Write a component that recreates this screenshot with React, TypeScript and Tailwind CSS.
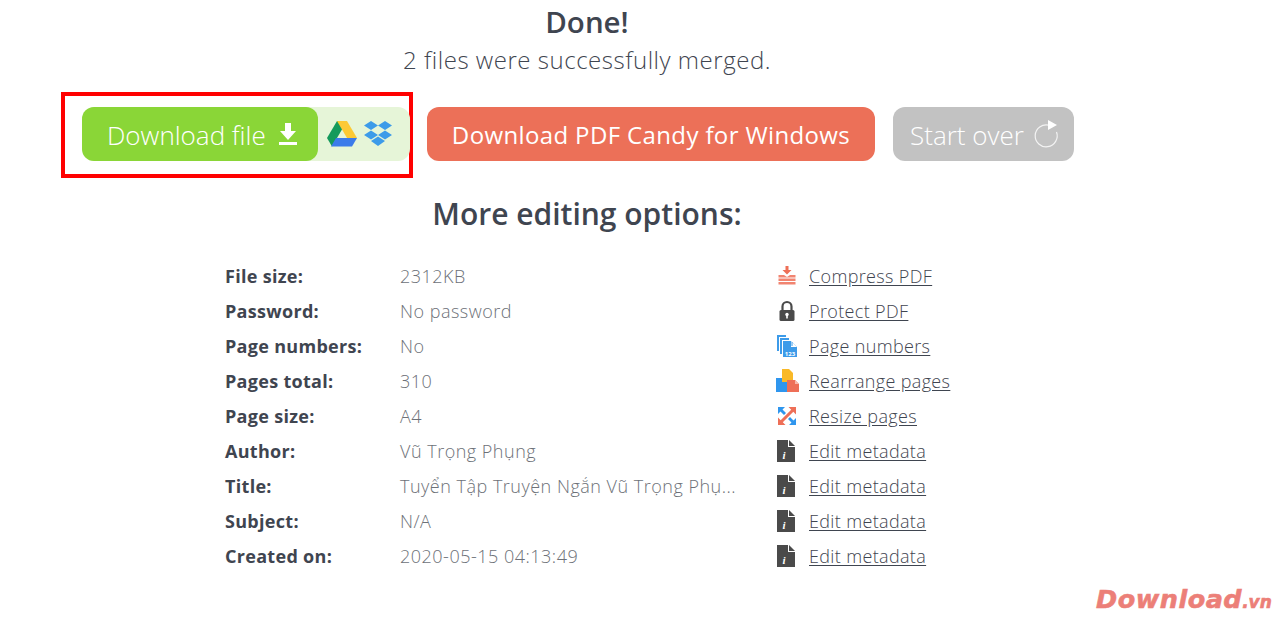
const font = { fontFamily: '"Open Sans", "Noto Sans", sans-serif' }

const rows = [
  ["File size:", "2312KB", "compress", "Compress PDF"],
  ["Password:", "No password", "lock", "Protect PDF"],
  ["Page numbers:", "No", "numbers", "Page numbers"],
  ["Pages total:", "310", "rearrange", "Rearrange pages"],
  ["Page size:", "A4", "resize", "Resize pages"],
  ["Author:", "Vũ Trọng Phụng", "meta", "Edit metadata"],
  ["Title:", "Tuyển Tập Truyện Ngắn Vũ Trọng Phụ...", "meta", "Edit metadata"],
  ["Subject:", "N/A", "meta", "Edit metadata"],
  ["Created on:", "2020-05-15 04:13:49", "meta", "Edit metadata"],
]

function RowIcon({ name }: { name: string }) {
  if (name === "compress")
    return (
      <svg width="22" height="22" viewBox="0 0 22 22">
        <path d="M9.500 1h3v4h3l-4.500 4.500L6.500 5h3z" fill="#ee6f57" />
        <path d="M2.500 10h5.500l3 2 3-2h5.500v2.500h-17zM2.500 13.500h17V16h-17zM2.500 17h17v2.500h-17z" fill="#ee6f57" opacity="0.85" />
      </svg>
    )
  if (name === "lock")
    return (
      <svg width="22" height="22" viewBox="0 0 22 22">
        <path d="M6.500 10V6.500a4.500 4.500 0 0 1 9 0V10" fill="none" stroke="#4a4a4a" strokeWidth="2.200" />
        <rect x="3.500" y="10" width="15" height="11" rx="1.500" fill="#4a4a4a" />
        <circle cx="11" cy="14.500" r="1.700" fill="#fff" />
        <rect x="10.200" y="15" width="1.600" height="3.500" fill="#fff" />
      </svg>
    )
  if (name === "numbers")
    return (
      <svg width="22" height="24" viewBox="0 0 22 24">
        <path d="M1 1h9v2H3v14H1z" fill="#3d9be9" />
        <path d="M4 4h9v2H6v14H4z" fill="#3d9be9" />
        <path d="M7 7h8l6 6v10H7z" fill="#3d9be9" />
        <path d="M15 7v6h6z" fill="#fff" />
        <rect x="15.500" y="8" width="1" height="4" fill="#3d9be9" />
        <text x="14" y="21.500" fontSize="6" fontWeight="700" fill="#fff" textAnchor="middle" style={font}>123</text>
      </svg>
    )
  if (name === "rearrange")
    return (
      <svg width="24" height="24" viewBox="0 0 24 24">
        <path d="M0 9h11v14H0z" fill="#2f96ee" />
        <path d="M6 0h7l4 4v9H6z" fill="#f9b928" />
        <path d="M11 11h8l4 4v8H11z" fill="#ee6f57" />
        <path d="M19 11v4h4z" fill="#f7b9ac" />
      </svg>
    )
  if (name === "resize")
    return (
      <svg width="22" height="22" viewBox="0 0 22 22">
        <path d="M2 2h7l-2.500 2.500L10 8l-2 2-3.500-3.500L2 9zM20 20h-7l2.500-2.500L12 14l2-2 3.500 3.500L20 13z" fill="#2f96ee" />
        <path d="M20 2v7.500l-2.700-2.700L6.800 17.300 9.500 20H2v-7.500l2.700 2.700L15.200 4.700 12.500 2z" fill="#ee6f57" />
      </svg>
    )
  return (
    <svg width="22" height="24" viewBox="0 0 22 24">
      <path d="M1 1h11v7h7v15H1z" fill="#4a4a4a" />
      <path d="M13 1l6 6h-6z" fill="#4a4a4a" />
      <text x="8" y="19.500" fontSize="11" fontWeight="700" fontStyle="italic" fill="#fff" textAnchor="middle" fontFamily="Liberation Serif, serif">i</text>
    </svg>
  )
}

export default function App() {
  return (
    <div className="relative h-[619px] w-[1282px] overflow-hidden bg-white text-[#3f4550]" style={font}>
      <div className="flex w-[1174px] flex-col items-center">
        <h1 className="mt-[2px] text-[29.500px] font-semibold leading-[40px]">Done!</h1>
        <p className="text-[24px] font-light leading-[36px] tracking-[0.53px]">2 files were successfully merged.</p>
      </div>

      <div className="mt-[14px] flex items-start pl-[61px]">
        <div className="h-[86px] w-[352px] border-4 border-[#ff0000] pl-[17px] pt-[11px]">
          <div className="flex h-[54px] w-[328px] items-center rounded-[12px] bg-[#e6f5d8]">
            <button className="flex h-[54px] w-[236px] items-center rounded-[12px] bg-[#8ad637] pl-[25px] pt-[2px] text-[26px] font-[350] text-white">
              Download file
              <svg className="mb-[2px] ml-[12px]" width="20" height="22" viewBox="0 0 20 22">
                <path d="M7 0h6v8h5l-8 9-8-9h5z" fill="#fff" />
                <rect x="1" y="19" width="18" height="3" fill="#fff" />
              </svg>
            </button>
            <svg className="ml-[8px]" width="32" height="28" viewBox="0 0 32 28">
              <path d="M11 1h10l-10 17-5 8.500L1 18z" fill="#149a5b" />
              <path d="M11 1h10l10 17H21z" fill="#fcc934" />
              <path d="M10 18h21l-5 8.500H5z" fill="#3b7bea" />
            </svg>
            <svg className="ml-[5px]" width="30" height="28" viewBox="0 0 30 28">
              <g fill="#3d9be9">
                <path d="M8 1l7 4.500L8 10 1 5.500zM22 1l7 4.500-7 4.500-7-4.500z" />
                <path d="M8 10.500l7 4.500-7 4.500-7-4.500zM22 10.500l7 4.500-7 4.500-7-4.500z" />
                <path d="M8 21l7-4.500 7 4.500-7 5z" />
              </g>
            </svg>
          </div>
        </div>
        <button className="ml-[14px] mt-[15px] flex h-[54px] w-[448px] items-center justify-center rounded-[12px] bg-[#ec7058] pt-[2px] text-[24px] font-normal tracking-[0.37px] text-white">
          Download PDF Candy for Windows
        </button>
        <button className="ml-[18px] mt-[15px] flex h-[54px] w-[181px] items-center rounded-[12px] bg-[#c2c2c2] pl-[17px] pt-[2px] text-[26px] font-[350] text-white">
          Start over
          <svg className="mb-[2px] ml-[9px]" width="26" height="30" viewBox="0 0 26 30">
            <path d="M16 6.200A11 11 0 1 0 23.500 13" fill="none" stroke="#f3f3f3" strokeWidth="1.200" />
            <path d="M15 1l9 5-9 5z" fill="#fff" />
          </svg>
        </button>
      </div>

      <h2 className="mt-[15px] w-[1174px] text-center text-[30px] font-semibold leading-[42px]">More editing options:</h2>

      <div className="mt-[23px] flex flex-col pl-[225px]">
        {rows.map(([label, value, icon, link], i) => (
          <div key={i} className="flex h-[35px] items-center text-[18px] leading-[24px]">
            <div className="w-[175px] font-bold tracking-[0.3px]">{label}</div>
            <div className="w-[376px] font-light tracking-[0.5px] text-[#6d7178]">{value}</div>
            <div className="flex w-[33px] items-center"><RowIcon name={icon} /></div>
            <a className="font-light tracking-[0.35px] underline underline-offset-[2px]">{link}</a>
          </div>
        ))}
      </div>

      <div className="absolute left-[1096px] top-[584px] text-[25.500px] font-bold italic leading-[30px] tracking-[0.500px] text-[#ec7f78]" style={{ fontFamily: '"DejaVu Sans", sans-serif', WebkitTextStroke: "0.6px #ec7f78" }}>
        Download<span className="text-[17px] tracking-[0px]">.vn</span>
      </div>
    </div>
  )
}
